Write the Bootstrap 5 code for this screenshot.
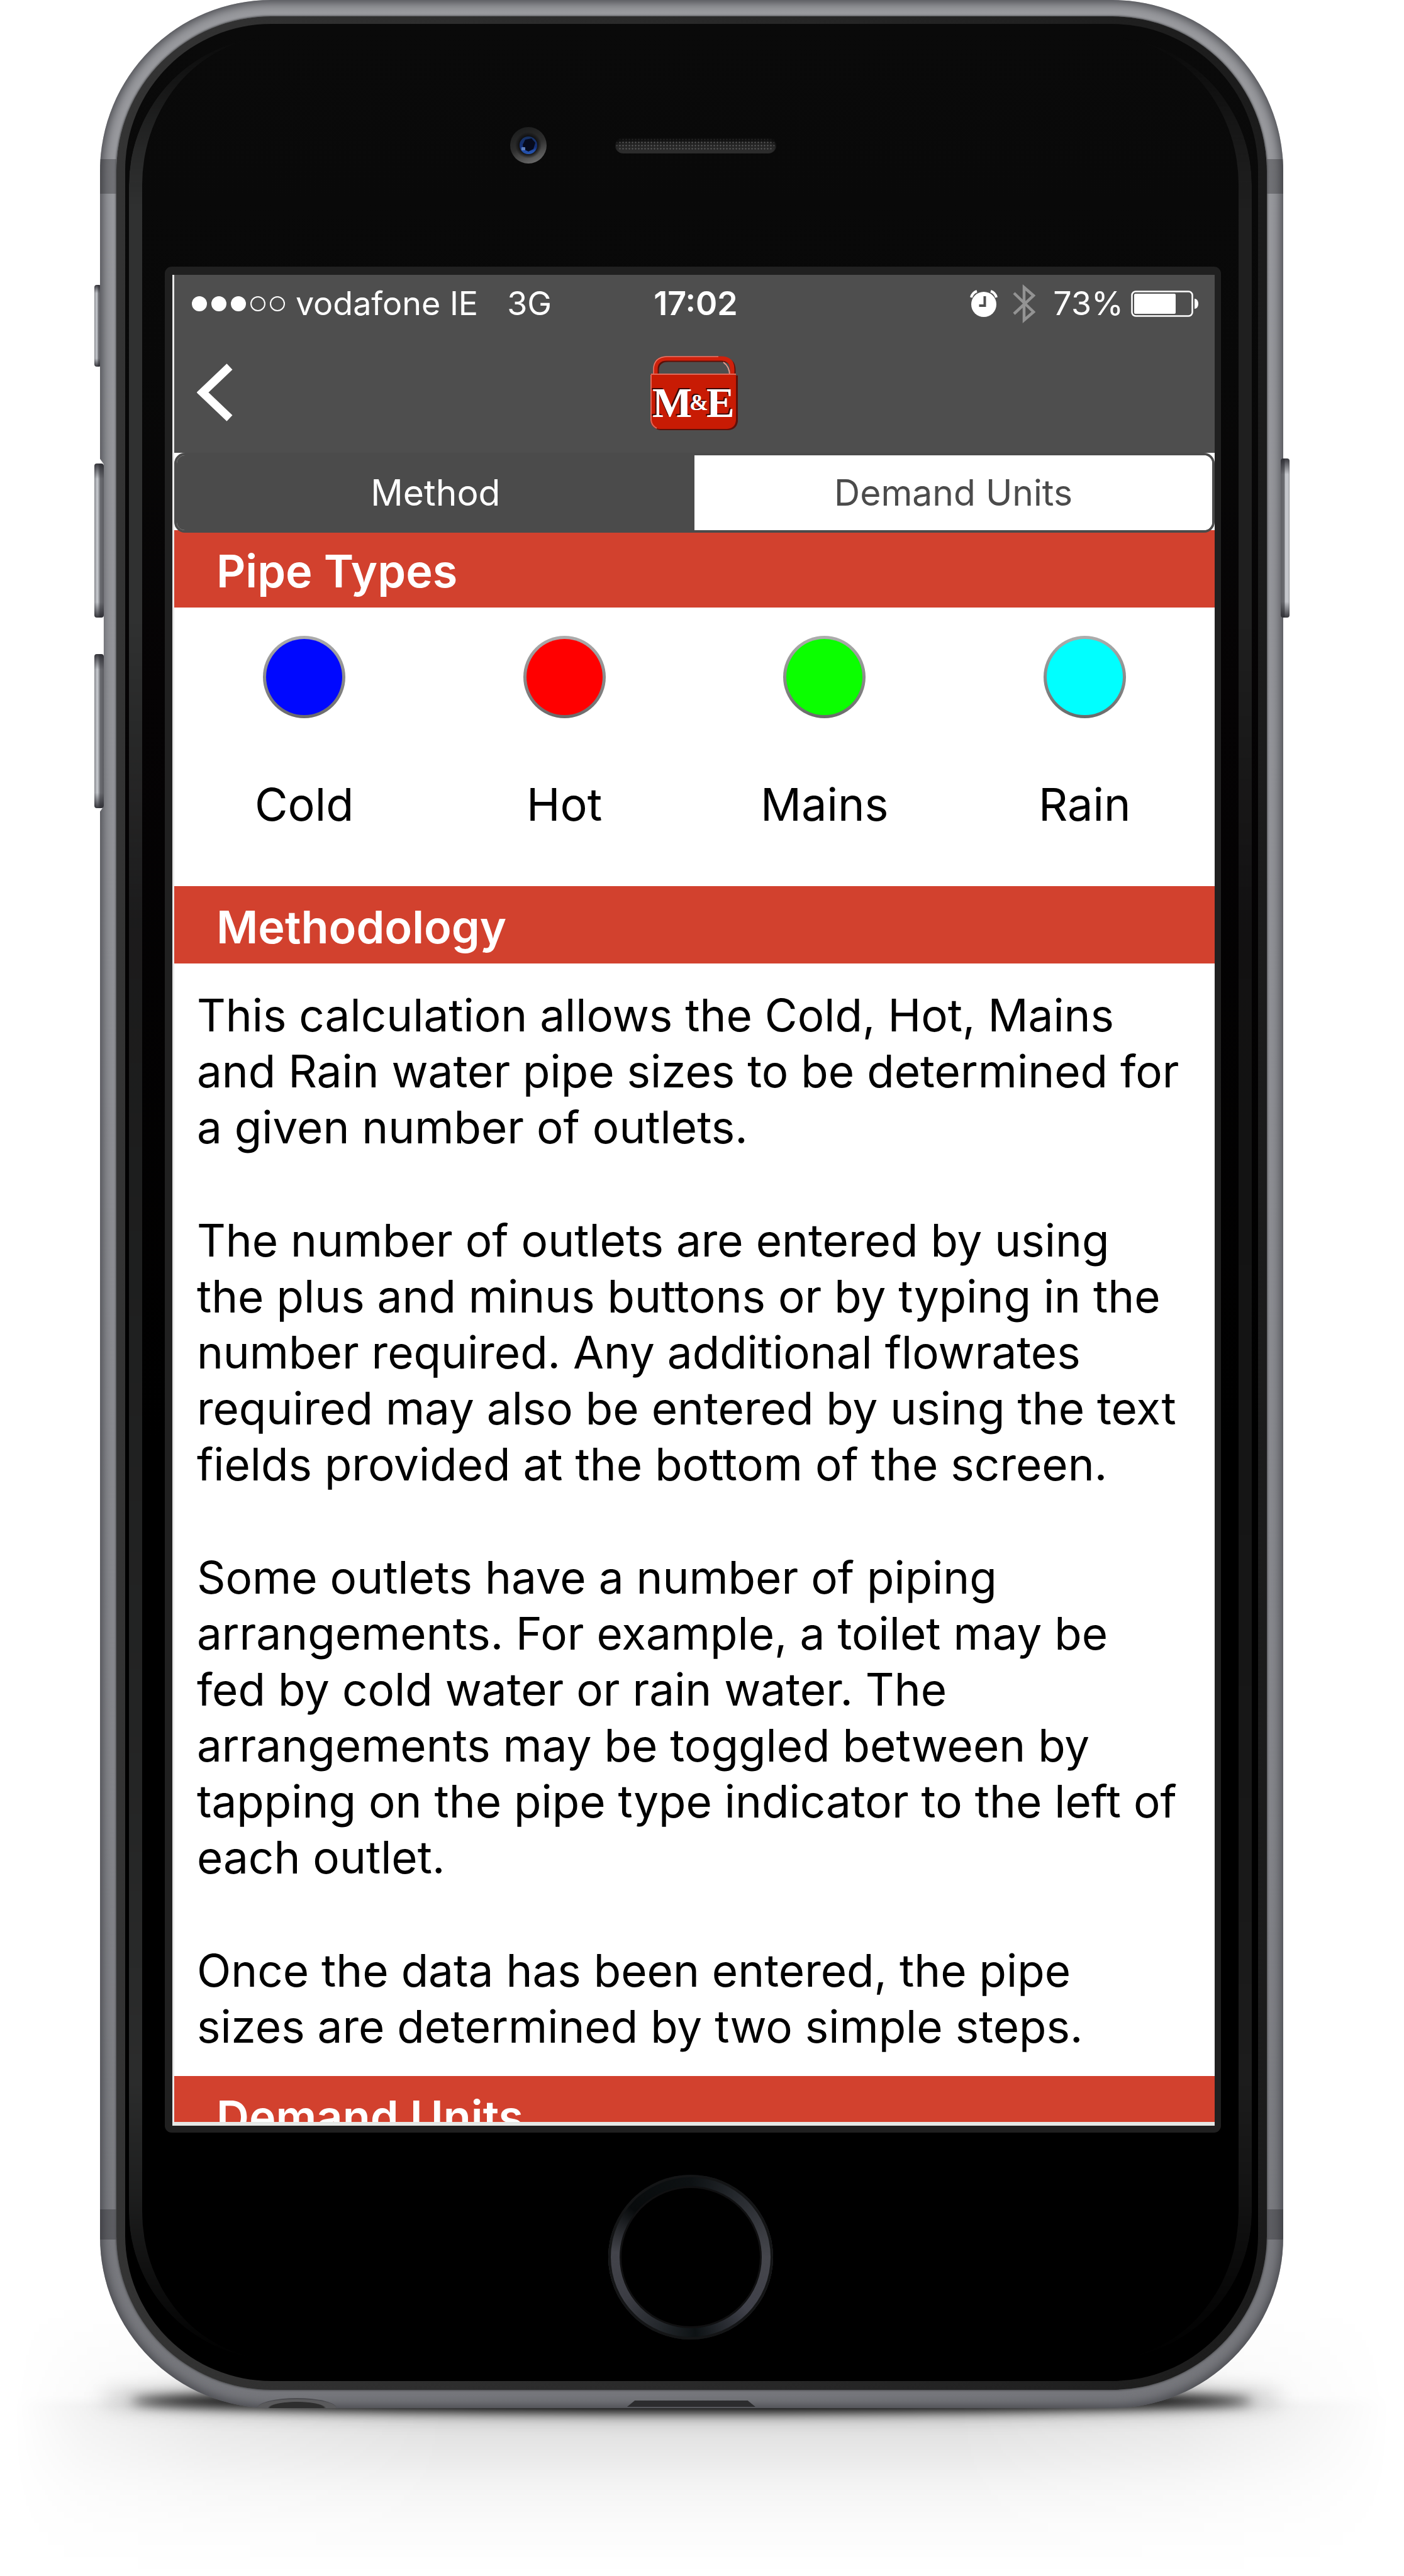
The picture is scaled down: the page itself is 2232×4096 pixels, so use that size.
<!DOCTYPE html>
<html lang="en">
<head>
<meta charset="utf-8">
<meta name="viewport" content="width=device-width, initial-scale=1">
<title>M&amp;E – Pipe sizing</title>
<link href="https://cdn.jsdelivr.net/npm/bootstrap@5.3.0/dist/css/bootstrap.min.css" rel="stylesheet">
<style>
body { background: #fff; font-family: Inter, "Liberation Sans", sans-serif; overflow-x: hidden; }

/* stage and floor shadow */
.stage { padding: 0 8.6% 266px 7.12%; isolation: isolate; overflow: hidden; }
.floor { left: 0; right: 0; bottom: 0; height: 440px; z-index: -1;
  background: linear-gradient(to bottom, transparent 0, rgba(0,0,0,.05) 35%, rgba(0,0,0,.15) 39%, rgba(0,0,0,.1) 52%, rgba(0,0,0,.045) 68%, rgba(0,0,0,.015) 82%, transparent 100%);
  -webkit-mask-image: linear-gradient(to right, transparent 1%, rgba(0,0,0,.35) 6%, rgba(0,0,0,.7) 15%, #000 32%, #000 68%, rgba(0,0,0,.7) 84%, rgba(0,0,0,.35) 92%, transparent 99%);
  mask-image: linear-gradient(to right, transparent 1%, rgba(0,0,0,.35) 6%, rgba(0,0,0,.7) 15%, #000 32%, #000 68%, rgba(0,0,0,.7) 84%, rgba(0,0,0,.35) 92%, transparent 99%); }
.contact { left: 50px; right: 50px; bottom: -6px; height: 34px; background: #000; border-radius: 50%; filter: blur(9px); z-index: -1; }
.contact-soft { left: 0; right: 0; bottom: -10px; height: 50px; background: rgba(0,0,0,.35); border-radius: 50%; filter: blur(16px); z-index: -1; }

/* handset */
.handset { color: #fff; }
.shell { border-radius: 272px; padding: 26px 26px 29px; position: relative; overflow: hidden;
  background: linear-gradient(to bottom, #9a9b9f 0, #94959a 30%, #85868b 75%, #75767b 100%);
  box-shadow: inset 0 0 16px 4px #46474c; }
.ring { position: relative; border-radius: 246px; padding: 12px 14px 14px; background: linear-gradient(to right, #333 0, #292929 50%, #1b1b1b 100%); box-shadow: 0 0 3px 1px #4a4b4e; }
.glass { position: relative; border-radius: 232px; padding: 0 59px 0 63px; background: linear-gradient(to bottom, #0a0a0a 0, #080808 15%, #050304 28%, #000 60%); }
.shine { top: 20px; bottom: 34px; border: 0 solid; border-radius: 236px;
  -webkit-mask-image: linear-gradient(to bottom, transparent 0, rgba(0,0,0,.8) 190px, #000 280px, #000 25%, rgba(0,0,0,.55) 38%, rgba(0,0,0,.75) 75%, rgba(0,0,0,.9) 88%, rgba(0,0,0,.6) 93%, transparent 100%);
  mask-image: linear-gradient(to bottom, transparent 0, rgba(0,0,0,.8) 190px, #000 280px, #000 25%, rgba(0,0,0,.55) 38%, rgba(0,0,0,.75) 75%, rgba(0,0,0,.9) 88%, rgba(0,0,0,.6) 93%, transparent 100%); }
.shine-l { left: 6px; width: 480px; border-left: 21px solid #303131; }
.shine-r { right: 10px; width: 480px; border-right: 21px solid #1f1f1f; }
.antenna { width: 26px; background: rgba(30,30,34,.32); }
.antenna-t { top: 253px; height: 55px; }
.antenna-b { bottom: 268px; height: 48px; }
.jack { bottom: 0; left: 250px; width: 126px; height: 16px; border-radius: 50% 50% 0 0 / 100% 100% 0 0; background: radial-gradient(ellipse at 50% 100%, #2e2e2e 0 48%, #5a5a5c 52%); border-top: 2px solid #4c4c50; }
.port { bottom: 2px; left: 838px; width: 204px; height: 10px; background: #2c2c2e; clip-path: polygon(6% 0, 94% 0, 100% 100%, 0 100%); }

/* side keys */
.key { border-radius: 4px; background: linear-gradient(to bottom, rgba(40,40,46,.9) 0, transparent 10%, transparent 90%, rgba(40,40,46,.9) 100%), linear-gradient(to right, #85868b 0, #c8cbd0 30%, #9a9ca1 50%, #6b6c71 60%, #5c5d62 100%); }
.key-r { background: linear-gradient(to bottom, rgba(40,40,46,.9) 0, transparent 10%, transparent 90%, rgba(40,40,46,.9) 100%), linear-gradient(to right, #5f6065 0, #6b6c71 42%, #c4c6cb 50%, #c4c6cb 88%, #808186 100%); }
.key-mute { left: -9px; width: 11px; top: 453px; height: 130px; z-index: -1; }
.key-up { left: -9px; width: 15px; top: 737px; height: 245px; }
.key-down { left: -9px; width: 15px; top: 1040px; height: 245px; }
.key-power { right: -10px; width: 14px; top: 729px; height: 253px; }
.recess { left: -1px; width: 7px; top: 728px; height: 564px; background: #fff; clip-path: polygon(0 0, 100% 10px, 100% 554px, 0 100%); }

/* forehead and chin */
.forehead { height: 386px; gap: 109px; padding-right: 158px; }
.lens { width: 58px; height: 58px; }
.earpiece { width: 256px; height: 25px; border-radius: 13px; background-color: #262626;
  background-image: radial-gradient(#555 28%, transparent 32%), linear-gradient(to bottom, #111 0, #242424 40%, #303030 100%); background-size: 5px 5px, 100% 100%; box-shadow: inset 0 4px 4px #0c0c0c, inset 0 -5px 1px #2c2c2c; }
.chin { height: 395px; padding-right: 6px; }
.home-key { width: 262px; height: 262px; border: 0; padding: 0; border-radius: 50%; background: conic-gradient(#0d1113 0, #2a2d32 12%, #45464c 25%, #40414a 37%, #0d1214 49%, #22262a 56%, #3c3d44 66%, #43444b 76%, #080b0c 86%, #0d1113 100%); box-shadow: inset 0 0 0 4px #141516; }
.home-key span { display: block; margin: 18px; height: 226px; border-radius: 50%; background: #000; border: 3px solid #101011; }

/* screen */
.bezel { background: #202020; border-radius: 11px; padding: 13px 10px 11px 12px; }
.screen { background: #fff; border-left: 3px solid #e8e8e8; border-bottom: 6px solid #e6e8e6; color: #000; }
.appbar { background: #4e4e4e; color: #fff; }
.status { height: 92px; padding: 0 24px 0 28px; font-size: 52px; line-height: 60px; }
.status > div { flex: 1 1 0; }
.dots { gap: 7px; margin-right: 17px; }
.dots i { width: 24px; height: 24px; border-radius: 50%; border: 2px solid #fff; }
.dots i.on { background: #fff; }
.net { margin-left: 46px; }
.battery { margin-left: 12px; }
.navrow { height: 191px; padding: 0 36px; }
.navrow > * { flex: 1 1 0; }
.navrow > .brand { flex: 0 0 144px; }
.seg { height: 127px; margin-bottom: -4px; position: relative; background: #fff; border: 4px solid #4b4b4b; border-radius: 17px; overflow: hidden; }
.seg .btn { border: 0; border-radius: 0; font-size: 57px; line-height: 64px; padding: 0; color: #4b4b4b; background: #fff; }
.seg .btn.active { background: #4b4b4b; color: #fff; }
.band { height: 123px; background: #d2412e; color: #fff; font-size: 72px; line-height: 123px; font-weight: 600; padding: 3px 67px 0; margin: 0; overflow: hidden; }
.band-cut { height: 73px; }
.pipes { height: 443px; padding-top: 45px; font-size: 72px; line-height: 89px; }
.pipe-dot { width: 131px; height: 131px; padding: 5px; border: 0; border-radius: 50%; background: linear-gradient(to bottom, #adadad, #6a6a6a); }
.pipe-dot span { display: block; height: 100%; border-radius: 50%; }
.cold { background: #0008ff; } .hot { background: #f00; } .mains { background: #0bff00; } .rain { background: #0ff; }
.pipe-name { margin-top: 92px; }
.prose { padding: 38px 10px 34px 36px; font-size: 71px; line-height: 89px; }
.prose p { margin: 0 0 91px; }
.prose p:last-child { margin: 0; }
</style>
<script src="https://cdn.jsdelivr.net/npm/bootstrap@5.3.0/dist/js/bootstrap.bundle.min.js"></script>
</head>
<body>
<main class="stage position-relative">
  <div class="floor position-absolute"></div>
  <div class="handset position-relative">
    <div class="contact-soft position-absolute"></div>
    <div class="contact position-absolute"></div>
    <div class="key key-mute position-absolute"></div>
    <div class="shell">
      <div class="antenna antenna-t position-absolute start-0"></div>
      <div class="antenna antenna-t position-absolute end-0"></div>
      <div class="antenna antenna-b position-absolute start-0"></div>
      <div class="antenna antenna-b position-absolute end-0"></div>
      <div class="jack position-absolute"></div>
      <div class="port position-absolute"></div>
      <div class="ring">
        <div class="glass">
          <div class="shine shine-l position-absolute"></div>
          <div class="shine shine-r position-absolute"></div>

          <div class="forehead d-flex align-items-center justify-content-center">
            <svg class="lens" viewBox="0 0 58 58" aria-hidden="true">
              <defs>
                <linearGradient id="rim" x1=".3" y1="0" x2=".7" y2="1"><stop offset="0" stop-color="#1c1d1d"/><stop offset=".5" stop-color="#2e2e2e"/><stop offset="1" stop-color="#6c6c6c"/></linearGradient>
                <radialGradient id="well"><stop offset=".6" stop-color="#0a0a0c"/><stop offset="1" stop-color="#0a0a0c" stop-opacity="0"/></radialGradient>
                <linearGradient id="blue" x1="0" y1="0" x2="0" y2="1"><stop offset="0" stop-color="#173262"/><stop offset=".6" stop-color="#142f78"/><stop offset="1" stop-color="#2c62c8"/></linearGradient>
              </defs>
              <circle cx="29" cy="29" r="29" fill="url(#rim)"/>
              <circle cx="29" cy="29" r="21" fill="url(#well)"/>
              <circle cx="29" cy="29" r="14" fill="url(#blue)"/>
              <path d="M20 28l4-8 10-2 6 7-3 10-8 4-8-4z" fill="#060a1c"/>
              <path d="M17 34c5 7 15 8 23 1-4 9-18 11-23-1z" fill="#2450a8"/>
              <rect x="18" y="32" width="6" height="5" rx="1" fill="#5d7fc0"/>
            </svg>
            <div class="earpiece"></div>
          </div>

          <div class="bezel">
            <div class="screen">
              <header class="appbar">
                <div class="status d-flex align-items-center">
                  <div class="d-flex align-items-center text-nowrap">
                    <span class="dots d-flex"><i class="on"></i><i class="on"></i><i class="on"></i><i></i><i></i></span>
                    <span>vodafone IE</span><span class="net">3G</span>
                  </div>
                  <span class="fw-semibold">17:02</span>
                  <div class="d-flex align-items-center justify-content-end">
                    <svg width="44" height="44" viewBox="0 0 44 44" aria-hidden="true">
                      <circle cx="22" cy="23" r="20" fill="#fff"/>
                      <path d="M2 12A14 14 0 0 1 11 2M33 2A14 14 0 0 1 42 12" fill="none" stroke="#fff" stroke-width="4"/>
                      <path d="M23.500 10v15h-9" fill="none" stroke="#4e4e4e" stroke-width="4"/>
                    </svg>
                    <svg class="ms-4" width="36" height="62" viewBox="0 0 36 62" aria-hidden="true">
                      <path d="M2 14l31 30-15 13V5l15 13L2 47" fill="none" stroke="#939393" stroke-width="4.500"/>
                    </svg>
                    <span class="ms-4 ps-1">73%</span>
                    <svg class="battery" width="109" height="44" viewBox="0 0 109 44" aria-hidden="true">
                      <rect x="1.500" y="2.500" width="96" height="39" rx="6" fill="none" stroke="#fff" stroke-width="2.500"/>
                      <rect x="5" y="6" width="66" height="32" rx="2" fill="#fff"/>
                      <path d="M101 14c8 0 8 16 0 16z" fill="#fff"/>
                    </svg>
                  </div>
                </div>
                <nav class="navrow d-flex align-items-center">
                  <a href="#" aria-label="Back" class="lh-1">
                    <svg width="60" height="94" viewBox="0 0 60 94"><path d="M52 5L9 46l43 41" fill="none" stroke="#fff" stroke-width="13"/></svg>
                  </a>
                  <svg class="brand" height="120" viewBox="0 0 144 120" role="img" aria-label="M&amp;E">
                    <path d="M10 36V22Q10 5 28 5H114Q132 5 132 22V36" fill="none" stroke="#5d1009" stroke-width="7" transform="translate(2 2)"/>
                    <path d="M10 36V22Q10 5 28 5H114Q132 5 132 22V36" fill="none" stroke="#cf210c" stroke-width="7"/>
                    <path d="M7 32V21Q8 3 28 2H110" fill="none" stroke="#e47a6c" stroke-width="1.500"/>
                    <path d="M128 32Q128 18 118 11" fill="none" stroke="#ea9a8e" stroke-width="2"/>
                    <path d="M4 32H141V105Q139 118 126 119H18Q6 118 4 105z" fill="#5d1009"/>
                    <path d="M2 30H138V103Q137 116 124 117H16Q3 116 2 103z" fill="#c81b04"/>
                    <path d="M3 31V103Q4 112 12 116M3 30H138" fill="none" stroke="#e0695a" stroke-width="2"/>
                    <g font-family="Liberation Serif, serif" font-weight="700">
                      <g fill="#3d0a06"><text x="3" y="96" font-size="67">M</text><text x="62" y="85" font-size="36">&amp;</text><text x="89" y="96" font-size="67">E</text></g>
                      <g fill="#fff"><text x="5" y="98" font-size="67">M</text><text x="64" y="87" font-size="36">&amp;</text><text x="91" y="98" font-size="67">E</text></g>
                    </g>
                  </svg>
                  <span></span>
                </nav>
              </header>

              <div class="seg d-flex" role="group" aria-label="View">
                <button type="button" class="btn active flex-fill w-50">Method</button>
                <button type="button" class="btn flex-fill w-50">Demand Units</button>
              </div>

              <h2 class="band">Pipe Types</h2>
              <div class="pipes d-flex text-center">
                <div class="col-3"><button type="button" class="pipe-dot d-block mx-auto" aria-label="Cold"><span class="cold"></span></button><div class="pipe-name">Cold</div></div>
                <div class="col-3"><button type="button" class="pipe-dot d-block mx-auto" aria-label="Hot"><span class="hot"></span></button><div class="pipe-name">Hot</div></div>
                <div class="col-3"><button type="button" class="pipe-dot d-block mx-auto" aria-label="Mains"><span class="mains"></span></button><div class="pipe-name">Mains</div></div>
                <div class="col-3"><button type="button" class="pipe-dot d-block mx-auto" aria-label="Rain"><span class="rain"></span></button><div class="pipe-name">Rain</div></div>
              </div>

              <h2 class="band">Methodology</h2>
              <div class="prose">
                <p>This calculation allows the Cold, Hot, Mains<br>and Rain water pipe sizes to be determined for<br>a given number of outlets.</p>
                <p>The number of outlets are entered by using<br>the plus and minus buttons or by typing in the<br>number required. Any additional flowrates<br>required may also be entered by using the text<br>fields provided at the bottom of the screen.</p>
                <p>Some outlets have a number of piping<br>arrangements. For example, a toilet may be<br>fed by cold water or rain water. The<br>arrangements may be toggled between by<br>tapping on the pipe type indicator to the left of<br>each outlet.</p>
                <p>Once the data has been entered, the pipe<br>sizes are determined by two simple steps.</p>
              </div>
              <h2 class="band band-cut">Demand Units</h2>
            </div>
          </div>

          <div class="chin d-flex align-items-center justify-content-center">
            <button type="button" class="home-key" aria-label="Home"><span></span></button>
          </div>
        </div>
      </div>
    </div>
    <div class="recess position-absolute"></div>
    <div class="key key-up position-absolute"></div>
    <div class="key key-down position-absolute"></div>
    <div class="key key-r key-power position-absolute"></div>
  </div>
</main>
</body>
</html>
